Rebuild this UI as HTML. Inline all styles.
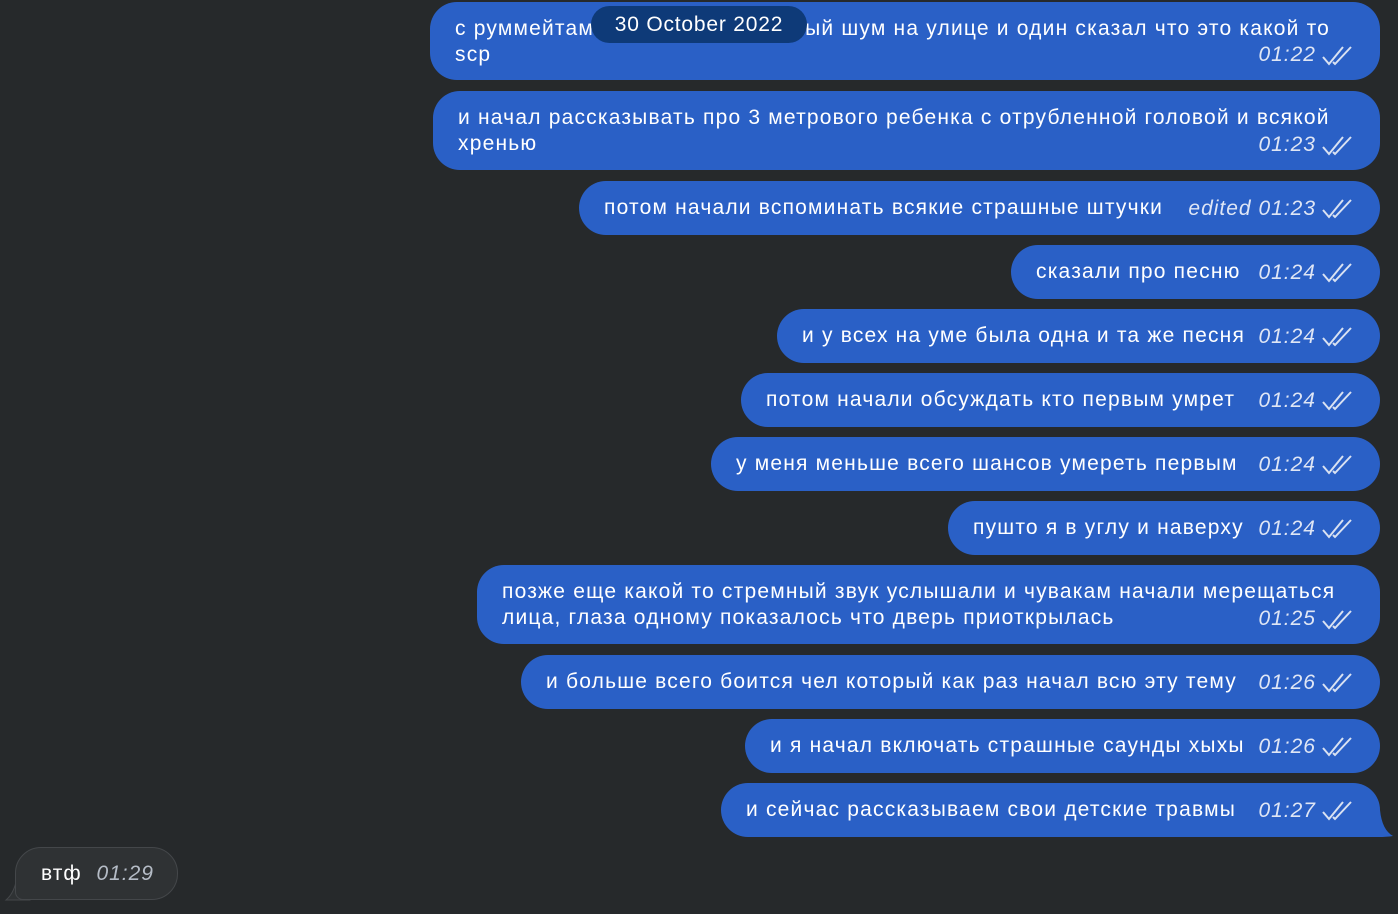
<!DOCTYPE html>
<html><head><meta charset="utf-8"><style>
body{margin:0;width:1398px;height:914px;background:#26292b;overflow:hidden;font-family:"Liberation Sans","DejaVu Sans",sans-serif;position:relative}
.b{position:absolute;right:18px;background:#2a60c6;border-radius:27px;color:#fff;font-size:21px;letter-spacing:1.2px;box-sizing:border-box;padding:0 25px;white-space:nowrap}
.s{height:54px;line-height:54px}
.t{position:absolute;left:25px;top:14px;line-height:26px;white-space:nowrap}
.m{position:absolute;right:64px;bottom:12px;font-style:italic;color:#dfe6f5;line-height:26px;letter-spacing:1px}
.s .m{bottom:auto;top:0;line-height:56px}
.c{position:absolute;right:27px;width:32px;height:20px}
.s .c{top:18px}
.d .c{bottom:14px}
</style></head><body>
<svg width="0" height="0" style="position:absolute"><defs><g id="ck"><path d="M2 11 L8 18 L22 1 M12 16 L14 18 L30 1" fill="none" stroke="#d9e2f2" stroke-width="2"/></g></defs></svg>

<div class="b d" style="left:430px;top:2px;height:78px"><div class="t">с руммейтами услышали странный шум на улице и один сказал что это какой то<br>scp</div><span class="m">01:22</span><svg class="c"><use href="#ck"/></svg></div>
<div style="position:absolute;left:591px;top:6px;width:216px;height:37px;border-radius:19px;background:#0e3a78;color:#fff;font-size:21px;letter-spacing:0.8px;line-height:37px;text-align:center">30 October 2022</div>

<div class="b d" style="left:433px;top:91px;height:79px"><div class="t">и начал рассказывать про 3 метрового ребенка с отрубленной головой и всякой<br>хренью</div><span class="m">01:23</span><svg class="c"><use href="#ck"/></svg></div>

<div class="b s" style="left:579px;top:181px">потом начали вспоминать всякие страшные штучки<span class="m">edited 01:23</span><svg class="c"><use href="#ck"/></svg></div>
<div class="b s" style="left:1011px;top:245px">сказали про песню<span class="m">01:24</span><svg class="c"><use href="#ck"/></svg></div>
<div class="b s" style="left:777px;top:309px">и у всех на уме была одна и та же песня<span class="m">01:24</span><svg class="c"><use href="#ck"/></svg></div>
<div class="b s" style="left:741px;top:373px">потом начали обсуждать кто первым умрет<span class="m">01:24</span><svg class="c"><use href="#ck"/></svg></div>
<div class="b s" style="left:711px;top:437px">у меня меньше всего шансов умереть первым<span class="m">01:24</span><svg class="c"><use href="#ck"/></svg></div>
<div class="b s" style="left:948px;top:501px">пушто я в углу и наверху<span class="m">01:24</span><svg class="c"><use href="#ck"/></svg></div>

<div class="b d" style="left:477px;top:565px;height:79px"><div class="t">позже еще какой то стремный звук услышали и чувакам начали мерещаться<br>лица, глаза одному показалось что дверь приоткрылась</div><span class="m">01:25</span><svg class="c"><use href="#ck"/></svg></div>

<div class="b s" style="left:521px;top:655px">и больше всего боится чел который как раз начал всю эту тему<span class="m">01:26</span><svg class="c"><use href="#ck"/></svg></div>
<div class="b s" style="left:745px;top:719px">и я начал включать страшные саунды хыхы<span class="m">01:26</span><svg class="c"><use href="#ck"/></svg></div>
<div class="b s" style="left:721px;top:783px;border-bottom-right-radius:8px">и сейчас рассказываем свои детские травмы<span class="m">01:27</span><svg class="c"><use href="#ck"/></svg></div>
<svg style="position:absolute;left:1360px;top:810px" width="34" height="28"><path d="M0 0 L20 0 Q22 20 33 26 Q20 28 0 26Z" fill="#2a60c6"/></svg>

<svg style="position:absolute;left:2px;top:860px" width="30" height="42"><path d="M28 0 L28 40 L4 40 Q14 32 16 10Z" fill="#2f3234" stroke="#44474a"/></svg>
<div style="position:absolute;left:15px;top:847px;width:163px;height:53px;box-sizing:border-box;border:1px solid #44474a;border-radius:26px;border-bottom-left-radius:8px;background:#2f3234;color:#fff;font-size:21px;letter-spacing:1px;line-height:52px;padding-left:25px">втф <span style="font-style:italic;color:#b5bcc6;margin-left:8px">01:29</span></div>
</body></html>
